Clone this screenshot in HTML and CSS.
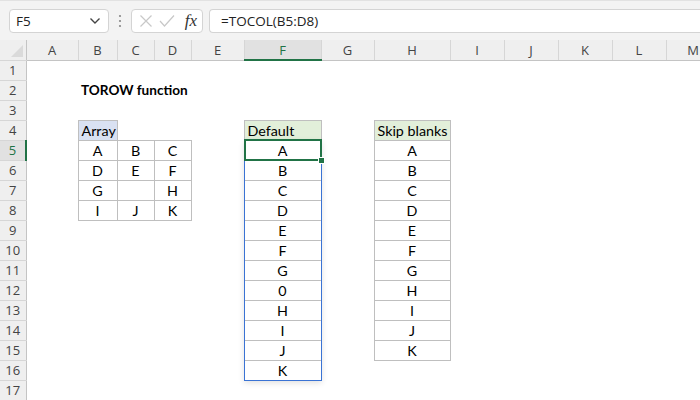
FILE: index.html
```html
<!DOCTYPE html>
<html lang="en">
<head>
  <meta charset="UTF-8" />
  <title>TOROW function</title>
  <link rel="stylesheet" href="styles.css">
</head>
<body>
  <div class="toolbar">
    <div class="namebox">
      <span>F5</span>
      <svg class="chevron" width="12" height="8" viewBox="0 0 12 8"><polyline points="1.5,1.5 6,6 10.5,1.5" fill="none" stroke="#444" stroke-width="1.4"/></svg>
    </div>
    <svg class="grip" width="4" height="14" viewBox="0 0 4 14">
      <circle cx="2" cy="2" r="1.1" fill="#888"/><circle cx="2" cy="7" r="1.1" fill="#888"/><circle cx="2" cy="12" r="1.1" fill="#888"/>
    </svg>
    <div class="fxbox">
      <svg width="14" height="14" viewBox="0 0 14 14"><path d="M1.5 1.5 L12.5 12.5 M12.5 1.5 L1.5 12.5" stroke="#c8c8c8" stroke-width="1.2" fill="none"/></svg>
      <svg width="16" height="14" viewBox="0 0 16 14"><polyline points="1,7 5.5,12 15,1.5" stroke="#c8c8c8" stroke-width="1.2" fill="none"/></svg>
      <span class="fx">fx</span>
    </div>
    <div class="formula">=TOCOL(B5:D8)</div>
  </div>

  <table class="sheet">
    <colgroup>
      <col class="w-rh"><col class="w-a"><col class="w-b"><col class="w-c"><col class="w-d"><col class="w-e"><col class="w-f">
      <col class="w-g"><col class="w-h"><col class="w-n"><col class="w-n"><col class="w-n"><col class="w-n"><col class="w-n">
    </colgroup>
    <tr class="colhead">
      <th class="corner"><span class="tri"></span></th>
      <th>A</th><th>B</th><th>C</th><th>D</th><th>E</th><th class="active">F</th><th>G</th><th>H</th><th>I</th><th>J</th><th>K</th><th>L</th><th>M</th>
    </tr>
    <tr><th>1</th><td></td><td></td><td></td><td></td><td></td><td></td><td></td><td></td><td></td><td></td><td></td><td></td><td></td></tr>
    <tr><th>2</th><td></td><td class="title">TOROW function</td><td></td><td></td><td></td><td></td><td></td><td></td><td></td><td></td><td></td><td></td><td></td></tr>
    <tr><th>3</th><td></td><td></td><td></td><td></td><td></td><td></td><td></td><td></td><td></td><td></td><td></td><td></td><td></td></tr>
    <tr><th>4</th><td></td><td class="b hb">Array</td><td></td><td></td><td></td><td class="b hg">Default</td><td></td><td class="b hg">Skip blanks</td><td></td><td></td><td></td><td></td><td></td></tr>
    <tr><th class="active">5</th><td></td><td class="b">A</td><td class="b">B</td><td class="b">C</td><td></td><td class="b sel">A<span class="handle"></span></td><td></td><td class="b">A</td><td></td><td></td><td></td><td></td><td></td></tr>
    <tr><th>6</th><td></td><td class="b">D</td><td class="b">E</td><td class="b">F</td><td></td><td class="b">B</td><td></td><td class="b">B</td><td></td><td></td><td></td><td></td><td></td></tr>
    <tr><th>7</th><td></td><td class="b">G</td><td class="b"></td><td class="b">H</td><td></td><td class="b">C</td><td></td><td class="b">C</td><td></td><td></td><td></td><td></td><td></td></tr>
    <tr><th>8</th><td></td><td class="b">I</td><td class="b">J</td><td class="b">K</td><td></td><td class="b">D</td><td></td><td class="b">D</td><td></td><td></td><td></td><td></td><td></td></tr>
    <tr><th>9</th><td></td><td></td><td></td><td></td><td></td><td class="b">E</td><td></td><td class="b">E</td><td></td><td></td><td></td><td></td><td></td></tr>
    <tr><th>10</th><td></td><td></td><td></td><td></td><td></td><td class="b">F</td><td></td><td class="b">F</td><td></td><td></td><td></td><td></td><td></td></tr>
    <tr><th>11</th><td></td><td></td><td></td><td></td><td></td><td class="b">G</td><td></td><td class="b">G</td><td></td><td></td><td></td><td></td><td></td></tr>
    <tr><th>12</th><td></td><td></td><td></td><td></td><td></td><td class="b">0</td><td></td><td class="b">H</td><td></td><td></td><td></td><td></td><td></td></tr>
    <tr><th>13</th><td></td><td></td><td></td><td></td><td></td><td class="b">H</td><td></td><td class="b">I</td><td></td><td></td><td></td><td></td><td></td></tr>
    <tr><th>14</th><td></td><td></td><td></td><td></td><td></td><td class="b">I</td><td></td><td class="b">J</td><td></td><td></td><td></td><td></td><td></td></tr>
    <tr><th>15</th><td></td><td></td><td></td><td></td><td></td><td class="b">J</td><td></td><td class="b">K</td><td></td><td></td><td></td><td></td><td></td></tr>
    <tr><th>16</th><td></td><td></td><td></td><td></td><td></td><td class="b">K</td><td></td><td></td><td></td><td></td><td></td><td></td><td></td></tr>
    <tr><th>17</th><td></td><td></td><td></td><td></td><td></td><td></td><td></td><td></td><td></td><td></td><td></td><td></td><td></td></tr>
  </table>
</body>
</html>
```

FILE: styles.css
```css
:root {
  --grid: #bfbfbf;
  --head-bg: #efefef;
  --head-line: #d6d6d6;
  --active-bg: #e1e1e1;
  --green: #217346;
  --blue: #3a73d4;
}

body {
  margin: 0;
  width: 700px;
  height: 400px;
  overflow: hidden;
  background: white;
  font-family: 'Lato', sans-serif;
  color: #000;
}

/* formula bar */
.toolbar {
  height: 40px;
  box-sizing: border-box;
  background: #f3f3f3;
  border-top: 1px solid #e2e2e2;
  display: flex;
  align-items: center;
  padding: 0 0 0 9px;
  font-family: 'Open Sans', sans-serif;
  font-size: 13.5px;
  color: #222;
}

.namebox, .fxbox, .formula {
  height: 24px;
  box-sizing: border-box;
  background: white;
  border: 1px solid #d4d4d4;
  border-radius: 4px;
  display: flex;
  align-items: center;
}

.namebox {
  width: 100px;
  padding: 0 7px 0 6px;
  justify-content: space-between;
}

.grip {
  margin: 0 9px 0 9px;
}

.fxbox {
  width: 72px;
  padding: 0 5px 0 7px;
  gap: 6px;
}

.fx {
  margin-left: auto;
  font-family: 'Liberation Serif', serif;
  font-style: italic;
  font-size: 17px;
  color: #333;
}

.formula {
  flex: 1;
  margin-left: 6px;
  padding-left: 11px;
  border-right: none;
  border-radius: 4px 0 0 4px;
}

/* sheet */
.sheet {
  border-collapse: collapse;
  table-layout: fixed;
  width: 720px;
  font-size: 14.3px;
}

.w-rh { width: 26px; }
.w-a { width: 52px; }
.w-b { width: 39px; }
.w-c, .w-d { width: 37px; }
.w-e, .w-g { width: 53px; }
.w-f { width: 77px; }
.w-h { width: 76px; }
.w-n { width: 54px; }

.sheet tr {
  height: 20px;
}

.sheet th {
  font-family: 'Open Sans', sans-serif;
  font-weight: normal;
  font-size: 13px;
  color: #444;
  background: var(--head-bg);
  padding: 0;
}

.colhead {
  height: 19px;
}

.colhead th {
  border-right: 1px solid var(--head-line);
  border-bottom: 1px solid #c4c4c4;
}

.sheet tr > th:first-child {
  border-right: 1px solid #c4c4c4;
  border-bottom: 1px solid var(--head-line);
}

.sheet tr > th.active:first-child {
  color: var(--green);
  background: var(--active-bg);
  border-right: 2px solid var(--green);
}

.sheet .colhead th.active {
  color: var(--green);
  background: var(--active-bg);
  border-bottom: 2px solid var(--green);
}

.corner {
  position: relative;
}

.tri {
  position: absolute;
  right: 3px;
  bottom: 3px;
  width: 0;
  height: 0;
  border-left: 12px solid transparent;
  border-bottom: 12px solid #dadada;
}

.sheet td {
  padding: 0 3px;
  text-align: center;
  white-space: nowrap;
  overflow: visible;
}

.sheet td.b {
  border: 1px solid var(--grid);
}

.sheet td.title {
  text-align: left;
  font-weight: bold;
  font-size: 13.6px;
}

.sheet td.hb, .sheet td.hg {
  text-align: left;
}

.hb { background: #d9e1f2; }
.hg { background: #e2efda; }

/* spill range and active cell */
.sel {
  position: relative;
}

.sel::before {
  content: "";
  position: absolute;
  left: -1px;
  top: -1px;
  width: 76px;
  height: 239px;
  border: 1px solid var(--blue);
  box-shadow: 0 2px 6px rgba(0,0,0,0.12);
  pointer-events: none;
}

.sel::after {
  content: "";
  position: absolute;
  left: -1px;
  top: -2px;
  width: 74px;
  height: 18px;
  border: 2px solid var(--green);
  pointer-events: none;
}

.handle {
  position: absolute;
  right: -4px;
  bottom: -4px;
  width: 5px;
  height: 5px;
  background: var(--green);
  border: 1px solid white;
  z-index: 2;
}
```
